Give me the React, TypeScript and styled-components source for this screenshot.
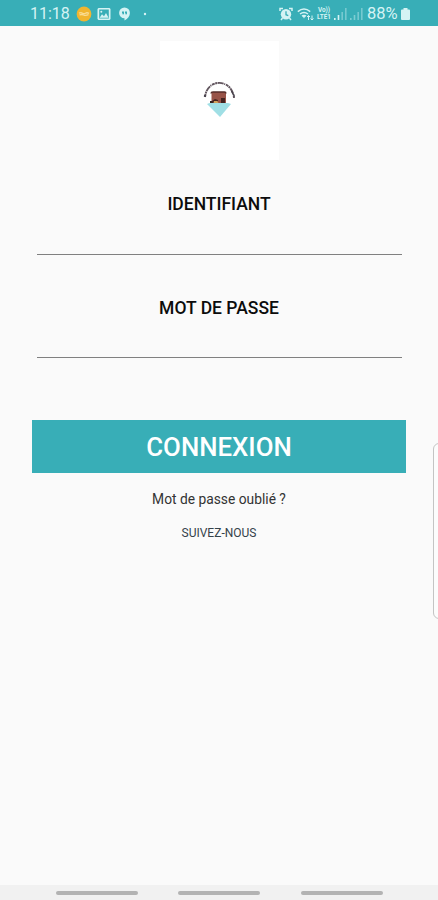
import React from "react";
import styled, { createGlobalStyle } from "styled-components";

const GlobalStyle = createGlobalStyle`
  * { box-sizing: border-box; }
  body { margin: 0; background: #fafafa; font-family: Roboto, sans-serif; overflow: hidden; }
`;

const Screen = styled.div`
  position: relative;
  display: flex;
  flex-direction: column;
  width: 438px;
  height: 900px;
  background: #fafafa;
  overflow: hidden;
`;

const StatusBar = styled.header`
  display: flex;
  justify-content: space-between;
  height: 26px;
  padding: 0 28px 0 30px;
  background: #38aeb7;
  color: #d5f3f4;
`;

const StatusGroup = styled.div`
  display: flex;
  align-items: center;
  height: 28px;
`;

const StatusText = styled.span<{ $width: number; $left?: number; $size?: number }>`
  flex: none;
  width: ${(p) => p.$width}px;
  margin-left: ${(p) => p.$left ?? 0}px;
  font-size: ${(p) => p.$size ?? 16}px;
  line-height: 28px;
  white-space: nowrap;
`;

const Icon = styled.svg<{ $left: number }>`
  display: block;
  flex: none;
  margin-left: ${(p) => p.$left}px;
`;

const NetworkLabel = styled.div`
  display: flex;
  flex: none;
  flex-direction: column;
  align-items: center;
  width: 16px;
  margin-left: 2px;
  font-size: 6.4px;
  font-weight: 700;
  line-height: 7px;
`;

const Form = styled.main`
  display: flex;
  flex: 1;
  flex-direction: column;
  align-items: center;
  padding: 15px 32px 0;
`;

const LogoCard = styled.div`
  display: flex;
  width: 119px;
  height: 119px;
  background: #fff;
`;

const Field = styled.label<{ $top: number }>`
  display: flex;
  flex-direction: column;
  align-items: center;
  width: 365px;
  margin-top: ${(p) => p.$top}px;
`;

const FieldName = styled.span`
  color: #0c0c0c;
  font-size: 17.5px;
  font-weight: 500;
  line-height: 24px;
`;

const FieldInput = styled.input<{ $height: number }>`
  width: 100%;
  height: ${(p) => p.$height}px;
  padding: 0 4px;
  border: 0;
  border-bottom: 1px solid #808080;
  border-radius: 0;
  outline: 0;
  background: transparent;
  font: 18px Roboto, sans-serif;
`;

const SubmitButton = styled.button`
  width: 374px;
  height: 53px;
  margin-top: 62px;
  padding: 2px 0 0;
  border: 0;
  background: #38aeb7;
  color: #fff;
  font: 500 25.8px/51px Roboto, sans-serif;
`;

const ForgotLink = styled.a`
  margin-top: 16px;
  color: #333;
  font-size: 13.8px;
  line-height: 20px;
`;

const FollowLabel = styled.span`
  margin-top: 15px;
  color: #35424a;
  font-size: 12px;
  line-height: 18px;
`;

const EdgeHandle = styled.div`
  position: absolute;
  top: 443px;
  right: -8px;
  width: 13px;
  height: 176px;
  border: 1px solid #c4c4c4;
  border-radius: 6px;
  background: #fcfcfc;
`;

const NavigationBar = styled.nav`
  display: flex;
  gap: 40.4px;
  height: 15px;
  padding: 6px 0 0 56px;
  background: #f1f1f1;
`;

const NavigationHint = styled.span`
  width: 82px;
  height: 4px;
  border-radius: 2px;
  background: #b3b3b3;
`;

const Signal = ({ left, active }: { left: number; active?: boolean }) => (
  <Icon $left={left} width="14" height="14" viewBox="0 0 14 14" fill="#d5f3f4">
    <path opacity={active ? 1 : 0.45} d="M0 11h1.6v2H0zM3.7 8h1.6v5H3.7z" />
    <path opacity=".4" d="M7.4 5H9v8H7.4zM11 1h1.6v12H11z" />
  </Icon>
);

const Logo = () => (
  <svg width="119" height="119" viewBox="160 41 119 119" role="img">
    <path d="M205 97C207 78 232 78 234 98" fill="none" stroke="#62565f" strokeWidth="1.9" strokeDasharray="3 .5 2 .5 6 .6 1 .8" />
    <path d="M204 95.5l2 1M231.5 91l3 5.5" stroke="#45404b" strokeWidth="1.4" />
    <path d="M211.5 92h14.5v12h-14.5z" fill="#985348" />
    <path d="M211 93.5q0-1.5 2-1.5h11.5q1.5 0 1.5 1.5" fill="none" stroke="#552d2a" strokeWidth="1.3" />
    <path d="M212 101l3-2 3 1v3h-6zM221 98h4v5h-4z" fill="#43231f" />
    <path d="M214 101h3.5l1 2h-5z" fill="#d1a15b" />
    <path d="M207 104l2.5-1h18.5l3 1-11 13z" fill="#a0dfe5" />
    <path d="M210 101h2v2h-2z" fill="#342521" />
  </svg>
);

export default function App() {
  return (
    <>
      <GlobalStyle />
      <Screen>
        <StatusBar>
          <StatusGroup>
            <StatusText $width={40}>11:18</StatusText>
            <Icon $left={6} width="16" height="16" viewBox="0 0 16 16">
              <circle cx="8" cy="8" r="7.4" fill="#f1b52f" />
              <path d="M3 7.2q2-1 3.5 0t3 0 3.5.2M3.5 9q2-1 4 0t5-.3" fill="none" stroke="#f9dc91" strokeWidth="1.3" />
            </Icon>
            <Icon $left={5} width="14" height="14" viewBox="0 0 14 14" fill="#d5f3f4">
              <path fillRule="evenodd" d="M1.5 1h11l1 1v10l-1 1h-11l-1-1V2zm.7 1.6v8.8h9.6V2.6z" />
              <path d="M2.6 10.7 5 7.2l2 2L9 6l2.5 4.7z" />
              <circle cx="4.3" cy="4.8" r="1" />
            </Icon>
            <Icon $left={7} width="13" height="14" viewBox="0 0 12 14" fill="#d5f3f4">
              <path fillRule="evenodd" d="M6 .5a5.4 5.4 0 0 0 0 10.8v2.2c3.4-1.6 5.4-4.5 5.4-7.5A5.4 5.4 0 0 0 6 .5M3.5 4.5h2v2.2L4.3 8V6.5h-.8zm3 0h2v2.2L7.3 8V6.5h-.8z" />
            </Icon>
            <Icon $left={12} width="4" height="4" viewBox="0 0 4 4">
              <circle cx="2" cy="2" r="1.2" fill="#d5f3f4" />
            </Icon>
          </StatusGroup>
          <StatusGroup>
            <Icon $left={0} width="14" height="14" viewBox="0 0 14 14">
              <circle cx="7" cy="7.3" r="5.2" fill="#d5f3f4" />
              <path d="M1 4V1.5h3M10 1.5h3V4M3.5 11 2 13M10.5 11l1.5 2" fill="none" stroke="#d5f3f4" strokeWidth="1.5" />
              <path d="M7 4.3v3.4l2.3 1" fill="none" stroke="#38aeb7" strokeWidth="1.3" />
            </Icon>
            <Icon $left={4} width="17" height="14" viewBox="0 0 17 14" fill="none" stroke="#d5f3f4" strokeWidth="1.5">
              <path d="M.8 4.6q6.2-5 12.4 0M3 7q4-3.2 8 0M5 9.2q2-1.6 4 0" />
              <path d="M5.5 9 7 11.5 8.5 9z" fill="#d5f3f4" stroke="none" />
              <path d="M11.5 8.5V13M10 10l1.5-1.5L13 10M15 8.5V13M13.5 11.5 15 13l1.5-1.5" strokeWidth="1" />
            </Icon>
            <NetworkLabel>
              <span>Vo))</span>
              <span>LTE1</span>
            </NetworkLabel>
            <Signal left={2} active />
            <Signal left={2} />
            <StatusText $width={33} $left={3} $size={16.5}>88%</StatusText>
            <Icon $left={1} width="9" height="12" viewBox="0 0 9 12" fill="#d5f3f4">
              <path d="M2.5 0h4v1.5H8q1 0 1 1V11q0 1-1 1H1q-1 0-1-1V2.5q0-1 1-1h1.5z" />
            </Icon>
          </StatusGroup>
        </StatusBar>
        <Form>
          <LogoCard><Logo /></LogoCard>
          <Field $top={32}>
            <FieldName>IDENTIFIANT</FieldName>
            <FieldInput $height={39} type="text" />
          </Field>
          <Field $top={41}>
            <FieldName>MOT DE PASSE</FieldName>
            <FieldInput $height={38} type="password" />
          </Field>
          <SubmitButton>CONNEXION</SubmitButton>
          <ForgotLink>Mot de passe oublié ?</ForgotLink>
          <FollowLabel>SUIVEZ-NOUS</FollowLabel>
        </Form>
        <EdgeHandle />
        <NavigationBar>
          <NavigationHint />
          <NavigationHint />
          <NavigationHint />
        </NavigationBar>
      </Screen>
    </>
  );
}
